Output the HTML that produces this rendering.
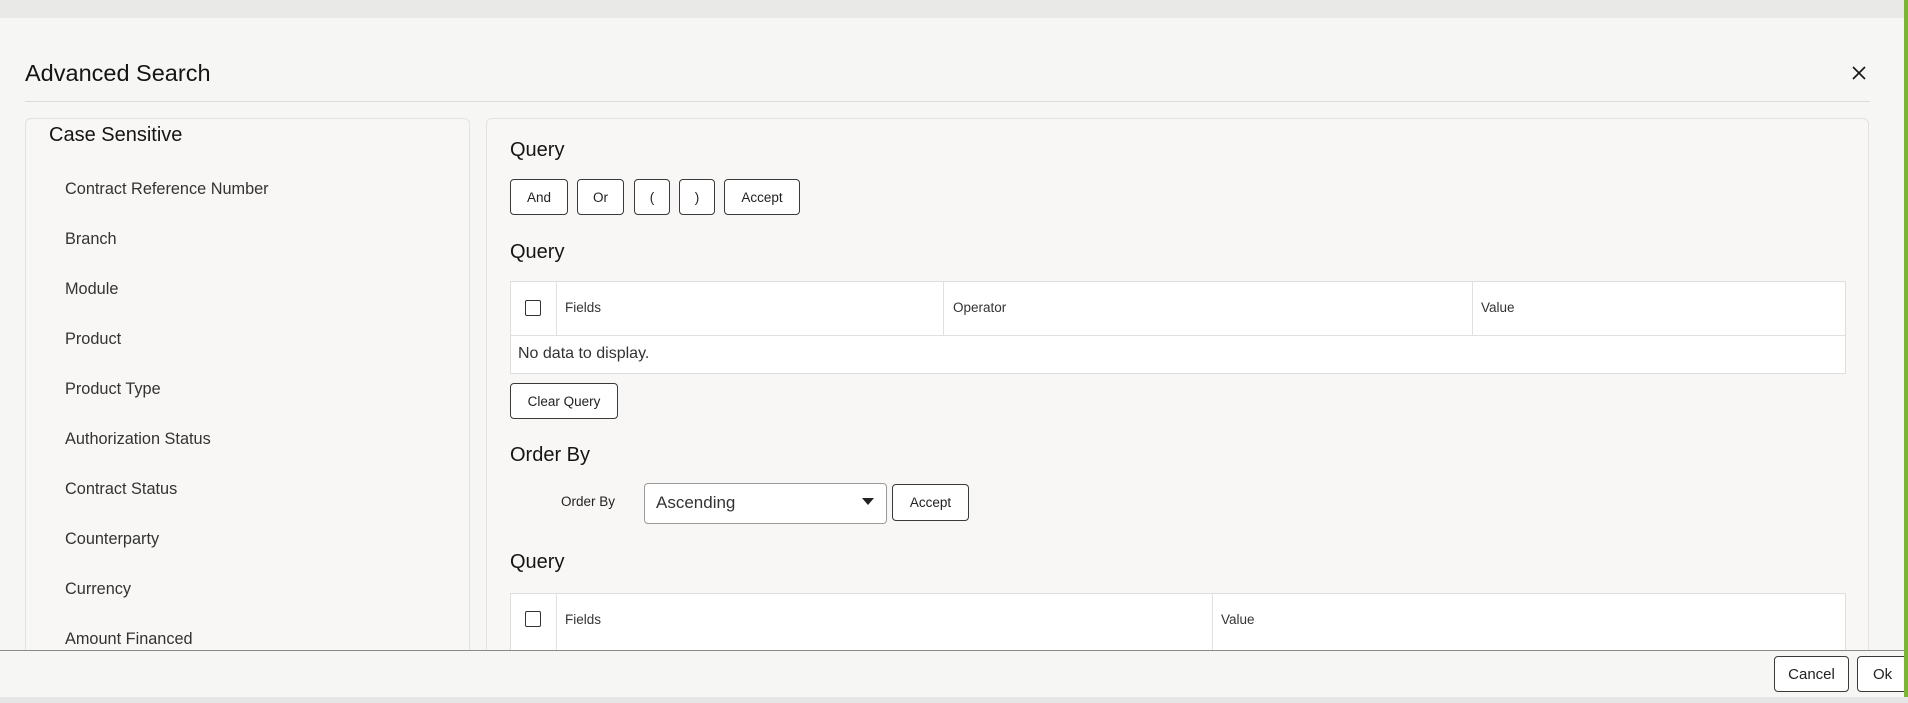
<!DOCTYPE html>
<html><head><meta charset="utf-8"><style>
*{box-sizing:border-box;margin:0;padding:0}
body{width:1908px;height:703px;overflow:hidden;background:#f6f6f5;font-family:"Liberation Sans",sans-serif;color:#161513;position:relative}
.a{position:absolute}
.top{left:0;top:0;width:1908px;height:18px;background:#e9e9e8}
.green{left:1904px;top:0;width:4px;height:697px;background:#7ab631}
.bot{left:0;top:697px;width:1908px;height:6px;background:#e6e6e6}
.panel{background:#f8f7f5;border:1px solid #e3e2e0;border-radius:6px}
.item{left:65px;font-size:16.3px;color:#333;line-height:20px}
.h{font-size:20px;line-height:24px;color:#161513}
.btn{border:1px solid #3a3a3a;border-radius:4px;background:#fff;font-size:13.5px;display:flex;align-items:center;justify-content:center;color:#222}
.tbl{background:#fff;border:1px solid #dedede}
.th{font-size:13.5px;color:#333}
.cb{width:16px;height:16px;border:1.5px solid #333;border-radius:2px;background:#fff}
</style></head><body>
<div class="a top"></div>
<div class="a" style="left:25px;top:58px;font-size:23.5px;line-height:30px">Advanced Search</div>
<svg class="a" style="left:1852px;top:66px" width="14" height="14" viewBox="0 0 14 14"><path d="M1 1L13 13M13 1L1 13" stroke="#161513" stroke-width="1.6"/></svg>
<div class="a" style="left:25px;top:101px;width:1845px;height:1px;background:#dcdcdc"></div>

<div class="a panel" style="left:25px;top:118px;width:445px;height:560px"></div>
<div class="a h" style="left:49px;top:123px">Case Sensitive</div>
<div class="a item" style="top:179px">Contract Reference Number</div>
<div class="a item" style="top:229px">Branch</div>
<div class="a item" style="top:279px">Module</div>
<div class="a item" style="top:329px">Product</div>
<div class="a item" style="top:379px">Product Type</div>
<div class="a item" style="top:429px">Authorization Status</div>
<div class="a item" style="top:479px">Contract Status</div>
<div class="a item" style="top:529px">Counterparty</div>
<div class="a item" style="top:579px">Currency</div>
<div class="a item" style="top:629px">Amount Financed</div>

<div class="a panel" style="left:486px;top:118px;width:1383px;height:560px"></div>
<div class="a h" style="left:510px;top:138px">Query</div>
<div class="a btn" style="left:510px;top:179px;width:58px;height:36px">And</div>
<div class="a btn" style="left:577px;top:179px;width:47px;height:36px">Or</div>
<div class="a btn" style="left:634px;top:179px;width:36px;height:36px">(</div>
<div class="a btn" style="left:679px;top:179px;width:36px;height:36px">)</div>
<div class="a btn" style="left:724px;top:179px;width:76px;height:36px">Accept</div>
<div class="a h" style="left:510px;top:240px">Query</div>
<div class="a tbl" style="left:510px;top:281px;width:1336px;height:93px"></div>
<div class="a" style="left:510px;top:335px;width:1336px;height:1px;background:#e0e0e0"></div>
<div class="a" style="left:556px;top:282px;width:1px;height:53px;background:#e0e0e0"></div>
<div class="a" style="left:943px;top:282px;width:1px;height:53px;background:#e0e0e0"></div>
<div class="a" style="left:1472px;top:282px;width:1px;height:53px;background:#e0e0e0"></div>
<div class="a cb" style="left:525px;top:300px"></div>
<div class="a th" style="left:565px;top:300px">Fields</div>
<div class="a th" style="left:953px;top:300px">Operator</div>
<div class="a th" style="left:1481px;top:300px">Value</div>
<div class="a" style="left:518px;top:345px;font-size:16px;color:#333">No data to display.</div>
<div class="a btn" style="left:510px;top:383px;width:108px;height:36px">Clear Query</div>
<div class="a h" style="left:510px;top:443px">Order By</div>
<div class="a th" style="left:561px;top:494px;color:#222">Order By</div>
<div class="a" style="left:644px;top:483px;width:243px;height:41px;border:1px solid #9a9a9a;border-radius:4px;background:#fff"></div>
<div class="a" style="left:656px;top:493px;font-size:17px;color:#333">Ascending</div>
<svg class="a" style="left:862px;top:498px" width="12" height="8" viewBox="0 0 12 8"><path d="M0 0H12L6 7Z" fill="#222"/></svg>
<div class="a btn" style="left:892px;top:484px;width:77px;height:37px">Accept</div>
<div class="a h" style="left:510px;top:550px">Query</div>
<div class="a tbl" style="left:510px;top:593px;width:1336px;height:70px"></div>
<div class="a" style="left:556px;top:594px;width:1px;height:56px;background:#e0e0e0"></div>
<div class="a" style="left:1212px;top:594px;width:1px;height:56px;background:#e0e0e0"></div>
<div class="a cb" style="left:525px;top:611px"></div>
<div class="a th" style="left:565px;top:612px">Fields</div>
<div class="a th" style="left:1221px;top:612px">Value</div>

<div class="a" style="left:0;top:650px;width:1908px;height:47px;background:#f6f6f5;border-top:1px solid #8a8a8a"></div>
<div class="a btn" style="left:1774px;top:656px;width:75px;height:36px;font-size:15px">Cancel</div>
<div class="a btn" style="left:1857px;top:656px;width:60px;height:36px;font-size:15px;justify-content:flex-start;padding-left:15px">Ok</div>
<div class="a bot"></div>
<div class="a green"></div>
</body></html>
